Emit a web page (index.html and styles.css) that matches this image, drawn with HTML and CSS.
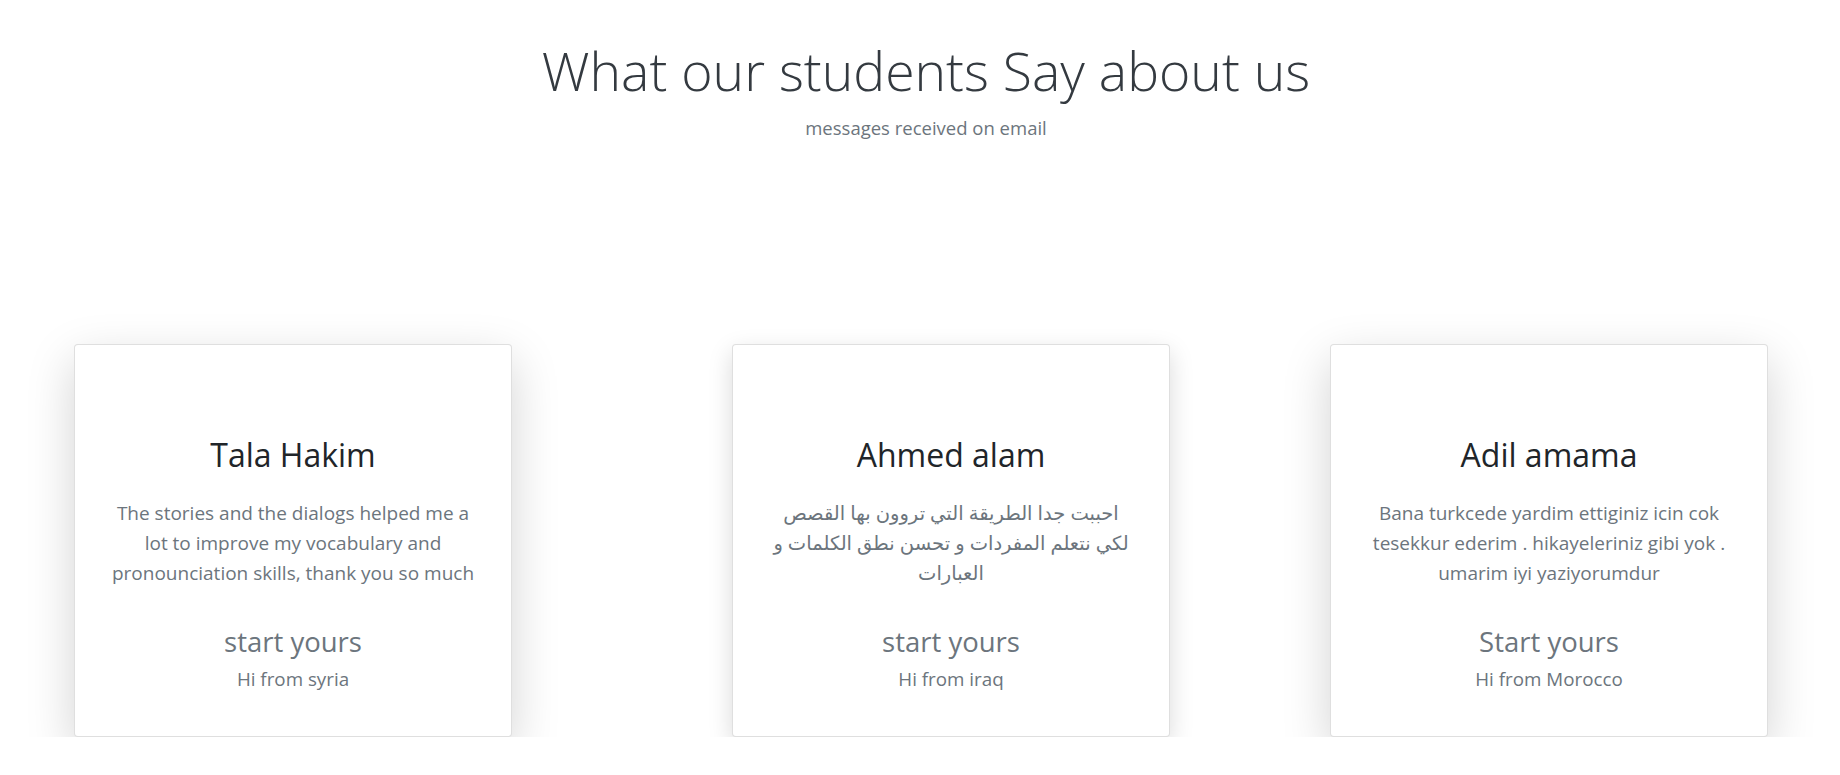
FILE: index.html
```html
<!DOCTYPE html>
<html lang="en">
<head>
<meta charset="utf-8">
<title>Testimonials</title>
<link rel="stylesheet" href="styles.css">
</head>
<body>
<section class="testimonials">
  <header class="intro">
    <h1 class="intro-title">What our students Say about us</h1>
    <p class="intro-sub">messages received on email</p>
  </header>
  <div class="cards">
    <article class="card card-lg card-first">
      <h2 class="card-name">Tala Hakim</h2>
      <p class="card-text">The stories and the dialogs helped me a lot to improve my vocabulary and pronounciation skills, thank you so much</p>
      <h3 class="card-cta">start yours</h3>
      <p class="card-from">Hi from syria</p>
    </article>
    <article class="card card-sm card-middle">
      <h2 class="card-name">Ahmed alam</h2>
      <p class="card-text card-text-ar" dir="rtl" lang="ar">احببت جدا الطريقة التي تروون بها القصص لكي نتعلم المفردات و تحسن نطق الكلمات و العبارات</p>
      <h3 class="card-cta">start yours</h3>
      <p class="card-from">Hi from iraq</p>
    </article>
    <article class="card card-lg">
      <h2 class="card-name">Adil amama</h2>
      <p class="card-text">Bana turkcede yardim ettiginiz icin cok tesekkur ederim . hikayeleriniz gibi yok . umarim iyi yaziyorumdur</p>
      <h3 class="card-cta">Start yours</h3>
      <p class="card-from">Hi from Morocco</p>
    </article>
  </div>
</section>
</body>
</html>
```

FILE: styles.css
```css
* { box-sizing: border-box; }
html, body { margin: 0; padding: 0; background: #fff; }
body {
  font-family: "Open Sans", "DejaVu Sans", sans-serif;
  color: #212529;
}
.testimonials { padding-top: 39px; }
.intro { text-align: center; padding-left: 12px; }
.intro-title {
  margin: 0;
  font-size: 53.5px;
  font-weight: 300;
  line-height: 64px;
  color: #343a40;
}
.intro-sub {
  margin: 12px 0 0;
  font-size: 18.5px;
  line-height: 25px;
  color: #6c757d;
}
.cards {
  display: flex;
  align-items: flex-start;
  padding-left: 74px;
  margin-top: 204px;
}
.card {
  width: 438px;
  height: 393px;
  background: #fff;
  border: 1px solid rgba(0,0,0,.125);
  border-radius: 4px;
  text-align: center;
  padding: 90px 36px 0;
}
.card-lg { box-shadow: 0 16px 48px rgba(0,0,0,.175); position: relative; }
.card-sm {
  box-shadow: 0 8px 24px rgba(0,0,0,.15);
  clip-path: inset(-60px -60px 0 -60px);
}
.card-first { margin-right: 220px; }
.card-middle { margin-right: 160px; }
.card-name {
  margin: 0;
  font-size: 32px;
  font-weight: 400;
  line-height: 40px;
  color: #212529;
}
.card-text {
  margin: 23px 0 0;
  font-size: 19px;
  line-height: 30px;
  color: #6c757d;
}
.card-text-ar { font-size: 19.5px; }
.card-cta {
  margin: 37px 0 0;
  font-size: 27.5px;
  font-weight: 400;
  line-height: 33px;
  color: #6c757d;
}
.card-from {
  margin: 8px 0 0;
  font-size: 18.8px;
  line-height: 26px;
  color: #6c757d;
}
```
